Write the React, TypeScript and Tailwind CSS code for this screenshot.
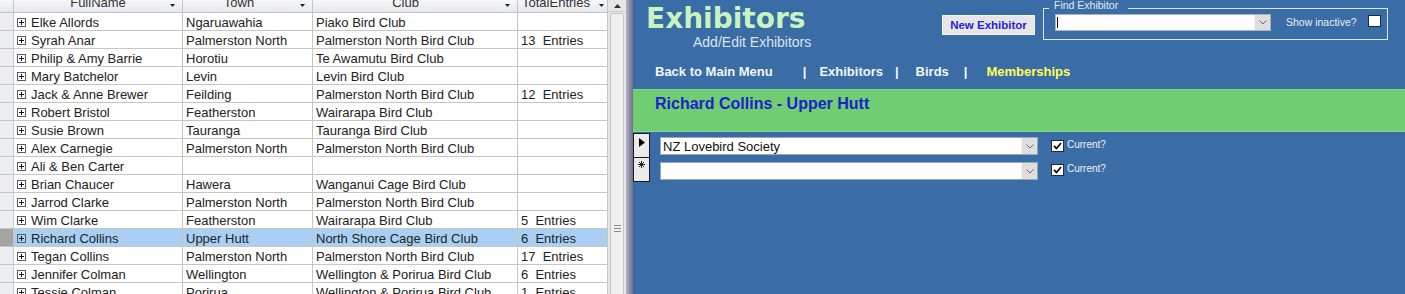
import React from "react";

type Row = [string, string, string, string];

const rows: Row[] = [
  ["Elke Allords", "Ngaruawahia", "Piako Bird Club", ""],
  ["Syrah Anar", "Palmerston North", "Palmerston North Bird Club", "13  Entries"],
  ["Philip & Amy Barrie", "Horotiu", "Te Awamutu Bird Club", ""],
  ["Mary Batchelor", "Levin", "Levin Bird Club", ""],
  ["Jack & Anne Brewer", "Feilding", "Palmerston North Bird Club", "12  Entries"],
  ["Robert Bristol", "Featherston", "Wairarapa Bird Club", ""],
  ["Susie Brown", "Tauranga", "Tauranga Bird Club", ""],
  ["Alex Carnegie", "Palmerston North", "Palmerston North Bird Club", ""],
  ["Ali & Ben Carter", "", "", ""],
  ["Brian Chaucer", "Hawera", "Wanganui Cage Bird Club", ""],
  ["Jarrod Clarke", "Palmerston North", "Palmerston North Bird Club", ""],
  ["Wim Clarke", "Featherston", "Wairarapa Bird Club", "5  Entries"],
  ["Richard Collins", "Upper Hutt", "North Shore Cage Bird Club", "6  Entries"],
  ["Tegan Collins", "Palmerston North", "Palmerston North Bird Club", "17  Entries"],
  ["Jennifer Colman", "Wellington", "Wellington & Porirua Bird Club", "6  Entries"],
  ["Tessie Colman", "Porirua", "Wellington & Porirua Bird Club", "1  Entries"],
];

const SELECTED = 12;

const SortArrow = () => (
  <svg width="5" height="3" viewBox="0 0 5 3" className="mt-[4px] shrink-0">
    <polygon points="0,0 5,0 2.5,3" fill="#222" />
  </svg>
);

const Chevron = () => (
  <svg width="8" height="5" viewBox="0 0 8 5">
    <polyline points="0.5,0.5 4,4 7.5,0.5" fill="none" stroke="#6b6b6b" strokeWidth="1" />
  </svg>
);

const PlusBox = () => (
  <div className="ml-[3px] mt-[5px] w-[9px] h-[9px] border border-[#5c5c5c] flex items-center justify-center shrink-0">
    <svg width="5" height="5" viewBox="0 0 5 5">
      <line x1="0" y1="2.5" x2="5" y2="2.5" stroke="#111" strokeWidth="1" />
      <line x1="2.5" y1="0" x2="2.5" y2="5" stroke="#111" strokeWidth="1" />
    </svg>
  </div>
);

const CheckBox = ({ checked, className }: { checked: boolean; className: string }) => (
  <div className={`w-[13px] h-[12px] bg-white border border-[#1d2a3d] flex items-center justify-center shrink-0 ${className}`}>
    {checked && (
      <svg width="9" height="8" viewBox="0 0 9 8">
        <polyline points="1,4 3.5,6.5 8,1" fill="none" stroke="#111" strokeWidth="1.8" />
      </svg>
    )}
  </div>
);

const Combo = ({ value, className }: { value: string; className: string }) => (
  <div className={`w-[378px] h-[18px] bg-white border border-[#9aa6b6] flex ${className}`}>
    <span className="flex-1 pl-[2px] text-[13px] leading-[18px] text-[#111] whitespace-nowrap overflow-hidden">{value}</span>
    <div className="w-[16px] bg-[#dedede] border-l border-[#f4f4f4] flex items-center justify-center">
      <Chevron />
    </div>
  </div>
);

function Datasheet() {
  return (
    <div className="w-[608px] shrink-0 flex flex-col bg-white text-[13px] text-[#222]">
      {/* column headers, top is cut off */}
      <div className="flex h-[13px] shrink-0 border-b border-[#c6c6c6] bg-linear-to-b from-[#f6f7f9] to-[#e5e8ec] text-[#333]">
        <div className="w-[14px] border-r border-[#c6c6c6]" />
        <div className="w-[169px] border-r border-[#c6c6c6] flex overflow-hidden">
          <span className="flex-1 text-center pl-[12px] leading-[6px]">FullName</span>
          <SortArrow />
          <span className="w-[7px]" />
        </div>
        <div className="w-[130px] border-r border-[#c6c6c6] flex overflow-hidden">
          <span className="flex-1 text-center pr-[5px] leading-[6px]">Town</span>
          <SortArrow />
          <span className="w-[7px]" />
        </div>
        <div className="w-[205px] border-r border-[#c6c6c6] flex overflow-hidden">
          <span className="flex-1 text-center pr-[7px] leading-[6px]">Club</span>
          <SortArrow />
          <span className="w-[7px]" />
        </div>
        <div className="w-[90px] border-r border-[#c6c6c6] flex overflow-hidden">
          <span className="flex-1 text-center pr-[5px] leading-[6px] whitespace-nowrap">TotalEntries</span>
          <SortArrow />
          <span className="w-[3px]" />
        </div>
      </div>

      {rows.map((r, i) => {
        const sel = i === SELECTED;
        const cell = sel ? "bg-[#a9d0f3]" : "bg-white";
        return (
          <div key={r[0]} className="flex h-[18px] shrink-0 border-b border-[#c6c6c6]">
            <div className={`w-[14px] border-r border-[#c6c6c6] ${sel ? "bg-[#a4a4a4]" : "bg-[#eceef0]"}`} />
            <div className={`w-[169px] border-r border-[#c6c6c6] flex items-start ${cell}`}>
              <PlusBox />
              <span className="ml-[5px] leading-[19px] whitespace-nowrap">{r[0]}</span>
            </div>
            <div className={`w-[130px] border-r border-[#c6c6c6] px-[3px] leading-[19px] whitespace-nowrap overflow-hidden ${cell}`}>{r[1]}</div>
            <div className={`w-[205px] border-r border-[#c6c6c6] px-[3px] leading-[19px] whitespace-nowrap overflow-hidden ${cell}`}>{r[2]}</div>
            <div className={`w-[90px] border-r border-[#c6c6c6] px-[3px] leading-[19px] whitespace-pre overflow-hidden ${cell}`}>{r[3]}</div>
          </div>
        );
      })}
    </div>
  );
}

function ScrollBar() {
  return (
    <div className="w-[18px] shrink-0 bg-[#e7e7e7] flex flex-col items-center">
      <div className="w-full h-[12px] shrink-0 border-b border-[#cdcdcd] flex items-center justify-center">
        <svg width="7" height="4" viewBox="0 0 7 4">
          <polygon points="0,4 7,4 3.5,0" fill="#333" />
        </svg>
      </div>
      <div className="w-[14px] h-[430px] shrink-0 mt-px bg-[#efefef] border border-[#c3c3c3] rounded-[2px] flex flex-col items-center justify-center gap-[2px]">
        <div className="w-[7px] h-px bg-[#8a8a8a]" />
        <div className="w-[7px] h-px bg-[#8a8a8a]" />
        <div className="w-[7px] h-px bg-[#8a8a8a]" />
      </div>
    </div>
  );
}

function ExhibitorsForm() {
  return (
    <div className="flex-1 bg-[#3a6ca5] flex flex-col">
      <div className="h-[89px] shrink-0 flex flex-col">
        <div className="h-[60px] shrink-0 flex items-start">
          <div className="w-[309px] pl-[13px] flex flex-col">
            <span className="mt-[5px] font-['DejaVu_Sans',Verdana,sans-serif] font-bold text-[28px] leading-[28px] text-[#c8f4c0]">
              Exhibitors
            </span>
            <span className="mt-[2px] ml-[47px] text-[14px] leading-[14px] text-[#dbe5f0]">Add/Edit Exhibitors</span>
          </div>
          <button className="mt-[15px] w-[93px] h-[20px] bg-[#e6e6e6] border border-[#f4f4f4] text-[11.5px] leading-[18px] font-bold text-[#1f22e0]">
            New Exhibitor
          </button>
          <div className="ml-[8px] mt-[8px] w-[345px] h-[32px] border border-[#dfe7f0] flex flex-col">
            <span className="-mt-[9px] ml-[5px] pl-[5px] pr-[10px] w-fit bg-[#3a6ca5] text-[10.5px] leading-[10px] text-[#e2eaf3]">
              Find Exhibitor
            </span>
            <div className="flex items-start">
              <div className="ml-[11px] mt-[4px] w-[216px] h-[17px] bg-white border border-[#a9b4c2] flex">
                <div className="flex-1 flex items-start">
                  <div className="ml-[1px] mt-[2px] w-px h-[11px] bg-black" />
                </div>
                <div className="w-[16px] bg-[#dedede] border-l border-[#f4f4f4] flex items-center justify-center">
                  <Chevron />
                </div>
              </div>
              <span className="ml-[15px] mt-[6px] text-[10.5px] leading-[12px] text-[#e8eef5] whitespace-nowrap">Show inactive?</span>
              <CheckBox checked={false} className="ml-[11px] mt-[5px]" />
            </div>
          </div>
        </div>
        <div className="mt-[4px] pl-[22px] flex text-[13px] leading-[15px] font-bold text-[#f4f6f9] whitespace-nowrap">
          <span>Back to Main Menu</span>
          <span className="ml-[30px]">|</span>
          <span className="ml-[13px]">Exhibitors</span>
          <span className="ml-[12px]">|</span>
          <span className="ml-[17px]">Birds</span>
          <span className="ml-[15px]">|</span>
          <span className="ml-[19px] text-[#ffff55]">Memberships</span>
        </div>
      </div>

      <div className="h-[43px] shrink-0 bg-[#71cd71] border-t border-b border-[#86d786] pl-[22px] pt-[2px]">
        <span className="text-[16px] leading-[20px] font-bold text-[#1a22cf]">Richard Collins - Upper Hutt</span>
      </div>

      <div className="mt-px flex flex-col">
        <div className="flex h-[25px] items-start">
          <div className="w-[17px] h-[25px] bg-[#ebebeb] border border-[#1a1a1a] flex items-start">
            <svg width="6" height="9" viewBox="0 0 6 9" className="ml-[5px] mt-[4px]">
              <polygon points="0,0 6,4.5 0,9" fill="#000" />
            </svg>
          </div>
          <Combo value="NZ Lovebird Society" className="ml-[10px] mt-[4px]" />
          <CheckBox checked className="ml-[13px] mt-[7px]" />
          <span className="ml-[3px] mt-[6px] text-[10px] leading-[12px] text-[#eef2f8]">Current?</span>
        </div>
        <div className="flex h-[24px] items-start">
          <div className="w-[17px] h-[24px] bg-[#ebebeb] border-x border-b border-[#1a1a1a] flex items-start">
            <svg width="7" height="7" viewBox="0 0 7 7" className="ml-[4px] mt-[3px]">
              <line x1="3.5" y1="0" x2="3.5" y2="7" stroke="#222" strokeWidth="1" />
              <line x1="0" y1="3.5" x2="7" y2="3.5" stroke="#222" strokeWidth="1" />
              <line x1="1" y1="1" x2="6" y2="6" stroke="#222" strokeWidth="1" />
              <line x1="6" y1="1" x2="1" y2="6" stroke="#222" strokeWidth="1" />
            </svg>
          </div>
          <Combo value="" className="ml-[10px] mt-[4px]" />
          <CheckBox checked className="ml-[13px] mt-[6px]" />
          <span className="ml-[3px] mt-[5px] text-[10px] leading-[12px] text-[#eef2f8]">Current?</span>
        </div>
      </div>
    </div>
  );
}

export default function App() {
  return (
    <div className="w-[1405px] h-[294px] flex overflow-hidden font-['Liberation_Sans',Arial,sans-serif]">
      <Datasheet />
      <ScrollBar />
      <div className="w-[7px] shrink-0 bg-linear-to-r from-[#b4b4c6] to-[#6f6f8d]" />
      <ExhibitorsForm />
    </div>
  );
}
